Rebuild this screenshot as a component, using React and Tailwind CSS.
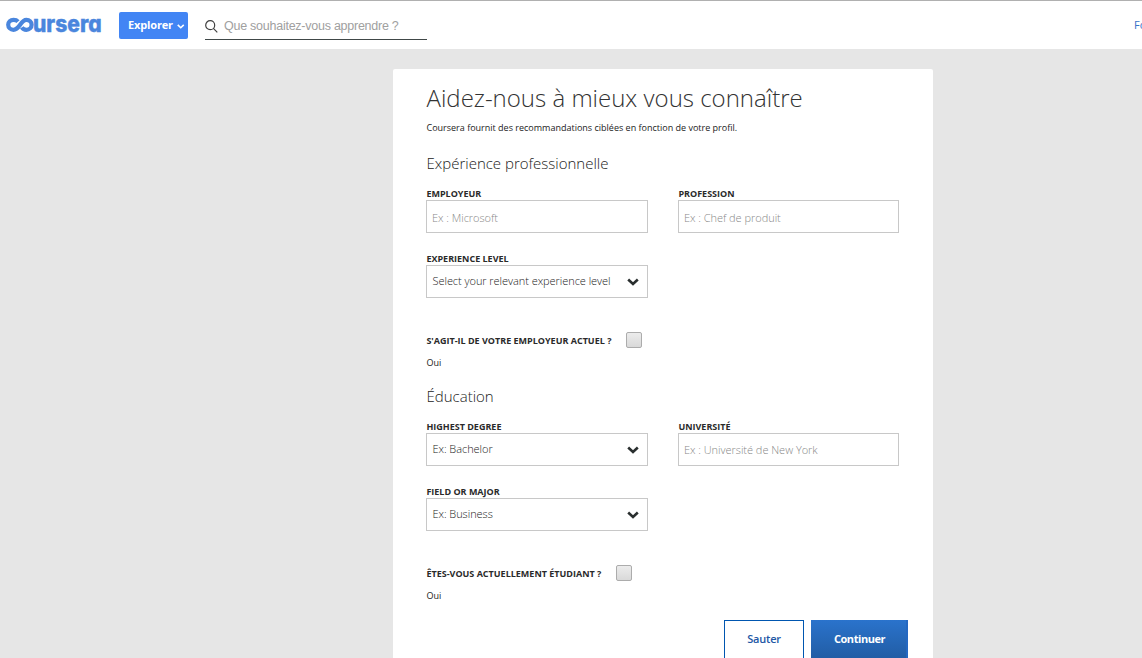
function Chevron({ className }) {
  return (
    <svg className={className} viewBox="0 0 12 8" fill="none" stroke="currentColor" strokeWidth="2.6">
      <path d="M1.2 1.5 L6 6 L10.8 1.5" />
    </svg>
  );
}

function Logo() {
  return (
    <svg className="h-[30px] w-24 overflow-visible" viewBox="0 -6 96 30" fill="none" aria-label="coursera">
      <path
        d="M12 5.6 C10.8 4.2 9.4 3.9 7.5 3.9 C4.4 3.9 2.2 6.1 2.2 8.8 C2.2 11.6 4.4 13.8 7.5 13.8 C13.8 13.8 14.4 3.9 20.4 3.9 C23.5 3.9 25.6 6.1 25.6 8.8 C25.6 11.6 23.4 13.8 20.4 13.8 C18 13.8 16.8 13 15.8 11.4"
        stroke="#4a86dd"
        strokeWidth="4.2"
      />
      <text
        x="27"
        y="15.7"
        textLength="68.6"
        lengthAdjust="spacingAndGlyphs"
        className="fill-[#4a86dd] stroke-[#4a86dd] stroke-[0.4] font-[Inter] text-[22.5px] font-extrabold [font-feature-settings:'cv11']"
      >
        ursera
      </text>
    </svg>
  );
}

function Label({ children }) {
  return <div className="h-[13px] pl-[0.4px] text-[9px] leading-[13px] font-bold text-[#2a2a2a] whitespace-nowrap">{children}</div>;
}

function TextField({ label, placeholder, inputClass = "pt-px" }) {
  return (
    <div>
      <Label>{label}</Label>
      <input
        placeholder={placeholder}
        className={`block h-[33px] w-full border border-[#c8c8c8] bg-white px-[5px] text-[11px] font-light tracking-[-0.03px] placeholder:text-[#888] placeholder:opacity-100 ${inputClass}`}
      />
    </div>
  );
}

function SelectField({ label, value }) {
  return (
    <div>
      <Label>{label}</Label>
      <div className="flex h-[33px] items-center justify-between border border-[#c8c8c8] pr-[8.5px] pl-[5.5px] whitespace-nowrap">
        <span className="text-[11px] font-light tracking-[-0.05px] text-[#222]">{value}</span>
        <Chevron className="h-2 w-3 text-[#2a2f2f]" />
      </div>
    </div>
  );
}

function CheckRow({ label }) {
  return (
    <div>
      <div className="flex h-4 items-center gap-[14.5px]">
        <Label>{label}</Label>
        <span className="h-4 w-4 rounded-[2px] border border-[#acacac] bg-linear-to-b from-[#ececec] to-[#d9d9d9]" />
      </div>
      <div className="mt-2 h-[13px] pl-[0.5px] text-[9px] leading-[13px]">Oui</div>
    </div>
  );
}

export default function App() {
  return (
    <div className="flex h-[658px] w-[1142px] flex-col overflow-hidden bg-[#e6e6e6] font-['Open_Sans',sans-serif] text-[#222]">
      <header className="flex h-[49px] w-full shrink-0 items-start overflow-hidden border-t border-[#b0b0b0] bg-white pl-[6px]">
        <div className="mt-[9px] w-24 shrink-0">
          <Logo />
        </div>
        <button className="mt-[11px] ml-[17px] flex h-[27px] w-[69px] shrink-0 items-center rounded-[2px] bg-[#4285f4] pl-[9px] text-[11px] font-bold text-white">
          <span className="w-[49px] text-left tracking-[-0.15px] whitespace-nowrap">Explorer</span>
          <Chevron className="mt-[2px] h-[5px] w-[7.5px]" />
        </button>
        <div className="mt-[11px] ml-[17px] flex h-7 w-[222px] shrink-0 items-center border-b border-[#404848]">
          <svg className="mt-px h-[13px] w-[13px] shrink-0" viewBox="0 0 13 13" fill="none" stroke="#404040" strokeWidth="1.2">
            <circle cx="5.2" cy="5.2" r="4.5" />
            <path d="M8.4 8.4 L12.3 12.3" />
          </svg>
          <input
            placeholder="Que souhaitez-vous apprendre ?"
            className="ml-[6px] w-[200px] pt-[2px] font-['Liberation_Sans',sans-serif] text-[12.5px] tracking-[-0.25px] placeholder:text-[#a0a0a0] placeholder:opacity-100"
          />
        </div>
        <a className="mt-[16px] ml-[707px] shrink-0 text-[11px] leading-4 whitespace-nowrap text-[#3872c8]">Fo</a>
      </header>

      <main className="mt-5 ml-[393px] h-[589px] w-[540px] shrink-0 rounded-t-[2px] bg-white pr-[25px] pl-[33px]">
        <h1 className="h-[52px] pt-[11px] pl-[0.5px] text-[24px] leading-9 font-light whitespace-nowrap text-[#333]">
          Aidez-nous à mieux vous connaître
        </h1>
        <p className="h-[13px] pl-[0.5px] text-[9px] leading-[13px] whitespace-nowrap">
          Coursera fournit des recommandations ciblées en fonction de votre profil.
        </p>
        <h2 className="mt-[17px] h-[24px] pl-[0.5px] text-[15px] leading-6 font-light text-[#222]">Expérience professionnelle</h2>
        <div className="mt-[12px] grid grid-cols-[222px_221px] gap-x-[30px] gap-y-[19px]">
          <TextField label="EMPLOYEUR" placeholder="Ex : Microsoft" />
          <TextField label="PROFESSION" placeholder="Ex : Chef de produit" />
          <SelectField label="EXPERIENCE LEVEL" value="Select your relevant experience level" />
        </div>
        <div className="mt-[34px]">
          <CheckRow label="S'AGIT-IL DE VOTRE EMPLOYEUR ACTUEL ?" />
        </div>
        <h2 className="mt-[15px] h-[24px] pl-[0.5px] text-[15px] leading-6 font-light text-[#222]">Éducation</h2>
        <div className="mt-[12px] grid grid-cols-[222px_221px] gap-x-[30px] gap-y-[19px]">
          <SelectField label="HIGHEST DEGREE" value="Ex: Bachelor" />
          <TextField label="UNIVERSITÉ" placeholder="Ex : Université de New York" inputClass="pb-px" />
          <SelectField label="FIELD OR MAJOR" value="Ex: Business" />
        </div>
        <div className="mt-[34px]">
          <CheckRow label="ÊTES-VOUS ACTUELLEMENT ÉTUDIANT ?" />
        </div>
        <div className="mt-[18px] flex justify-end gap-[7px] text-[11px]">
          <button className="h-10 w-20 border border-[#0056b0] bg-white pb-[2px] font-semibold tracking-[-0.2px] text-[#2257a5]">Sauter</button>
          <button className="h-10 w-[97px] border-r-2 border-[#2468c2] bg-linear-to-b from-[#2a73cc] to-[#215ca3] pb-[2px] pl-[2px] font-bold tracking-[-0.45px] text-white">
            Continuer
          </button>
        </div>
      </main>
    </div>
  );
}
